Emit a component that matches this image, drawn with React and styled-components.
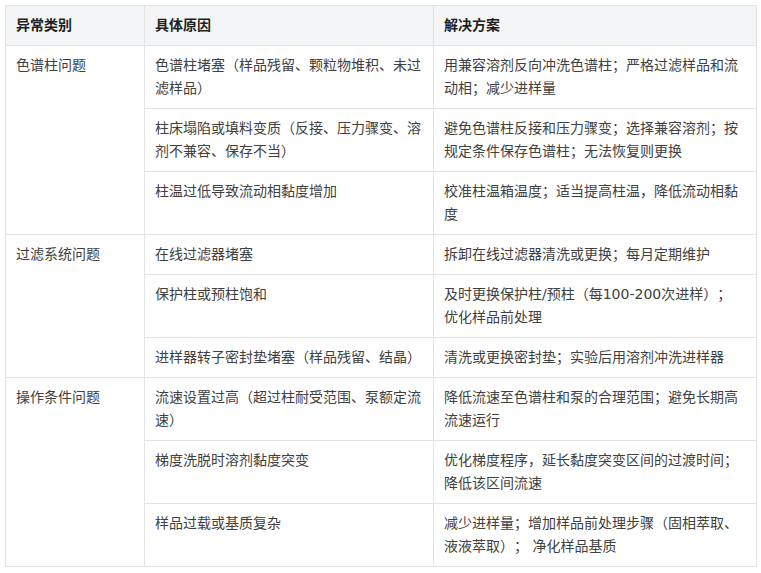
import React from "react";
import styled, { createGlobalStyle } from "styled-components";

const Global = createGlobalStyle`
  html, body { margin: 0; padding: 0; background: #fff; }
  body { font-family: "DejaVu Sans", "Noto Sans CJK SC", sans-serif; }
`;

const Wrap = styled.div`
  padding: 5px;
`;

const Table = styled.table`
  border-collapse: collapse;
  table-layout: fixed;
  width: 751px;
  font-size: 14px;
  line-height: 23px;
  color: #404040;
  text-spacing-trim: space-all;
`;

const Th = styled.th`
  background: #f4f5f6;
  border: 1px solid #e3e3e3;
  padding: 8px 10px;
  text-align: left;
  font-weight: 700;
  color: #1f1f1f;
`;

const Td = styled.td`
  border: 1px solid #e3e3e3;
  padding: 8px 10px;
  vertical-align: top;
  text-align: left;
`;

const data = [
  {
    cat: "色谱柱问题",
    rows: [
      ["色谱柱堵塞（样品残留、颗粒物堆积、未过滤样品）", "用兼容溶剂反向冲洗色谱柱；严格过滤样品和流动相；减少进样量"],
      ["柱床塌陷或填料变质（反接、压力骤变、溶剂不兼容、保存不当）", "避免色谱柱反接和压力骤变；选择兼容溶剂；按规定条件保存色谱柱；无法恢复则更换"],
      ["柱温过低导致流动相黏度增加", "校准柱温箱温度；适当提高柱温，降低流动相黏度"],
    ],
  },
  {
    cat: "过滤系统问题",
    rows: [
      ["在线过滤器堵塞", "拆卸在线过滤器清洗或更换；每月定期维护"],
      ["保护柱或预柱饱和", "及时更换保护柱/预柱（每100-200次进样）； 优化样品前处理"],
      ["进样器转子密封垫堵塞（样品残留、结晶）", "清洗或更换密封垫；实验后用溶剂冲洗进样器"],
    ],
  },
  {
    cat: "操作条件问题",
    rows: [
      ["流速设置过高（超过柱耐受范围、泵额定流速）", "降低流速至色谱柱和泵的合理范围；避免长期高流速运行"],
      ["梯度洗脱时溶剂黏度突变", "优化梯度程序，延长黏度突变区间的过渡时间；降低该区间流速"],
      ["样品过载或基质复杂", "减少进样量；增加样品前处理步骤（固相萃取、液液萃取）； 净化样品基质"],
    ],
  },
];

export default function App() {
  return (
    <>
      <Global />
      <Wrap>
        <Table>
          <colgroup>
            <col style={{ width: 139 }} />
            <col style={{ width: 289 }} />
            <col style={{ width: 323 }} />
          </colgroup>
          <thead>
            <tr>
              <Th>异常类别</Th>
              <Th>具体原因</Th>
              <Th>解决方案</Th>
            </tr>
          </thead>
          <tbody>
            {data.map((g) =>
              g.rows.map((r, i) => (
                <tr key={g.cat + i}>
                  {i === 0 && <Td rowSpan={g.rows.length}>{g.cat}</Td>}
                  <Td>{r[0]}</Td>
                  <Td>{r[1]}</Td>
                </tr>
              ))
            )}
          </tbody>
        </Table>
      </Wrap>
    </>
  );
}
